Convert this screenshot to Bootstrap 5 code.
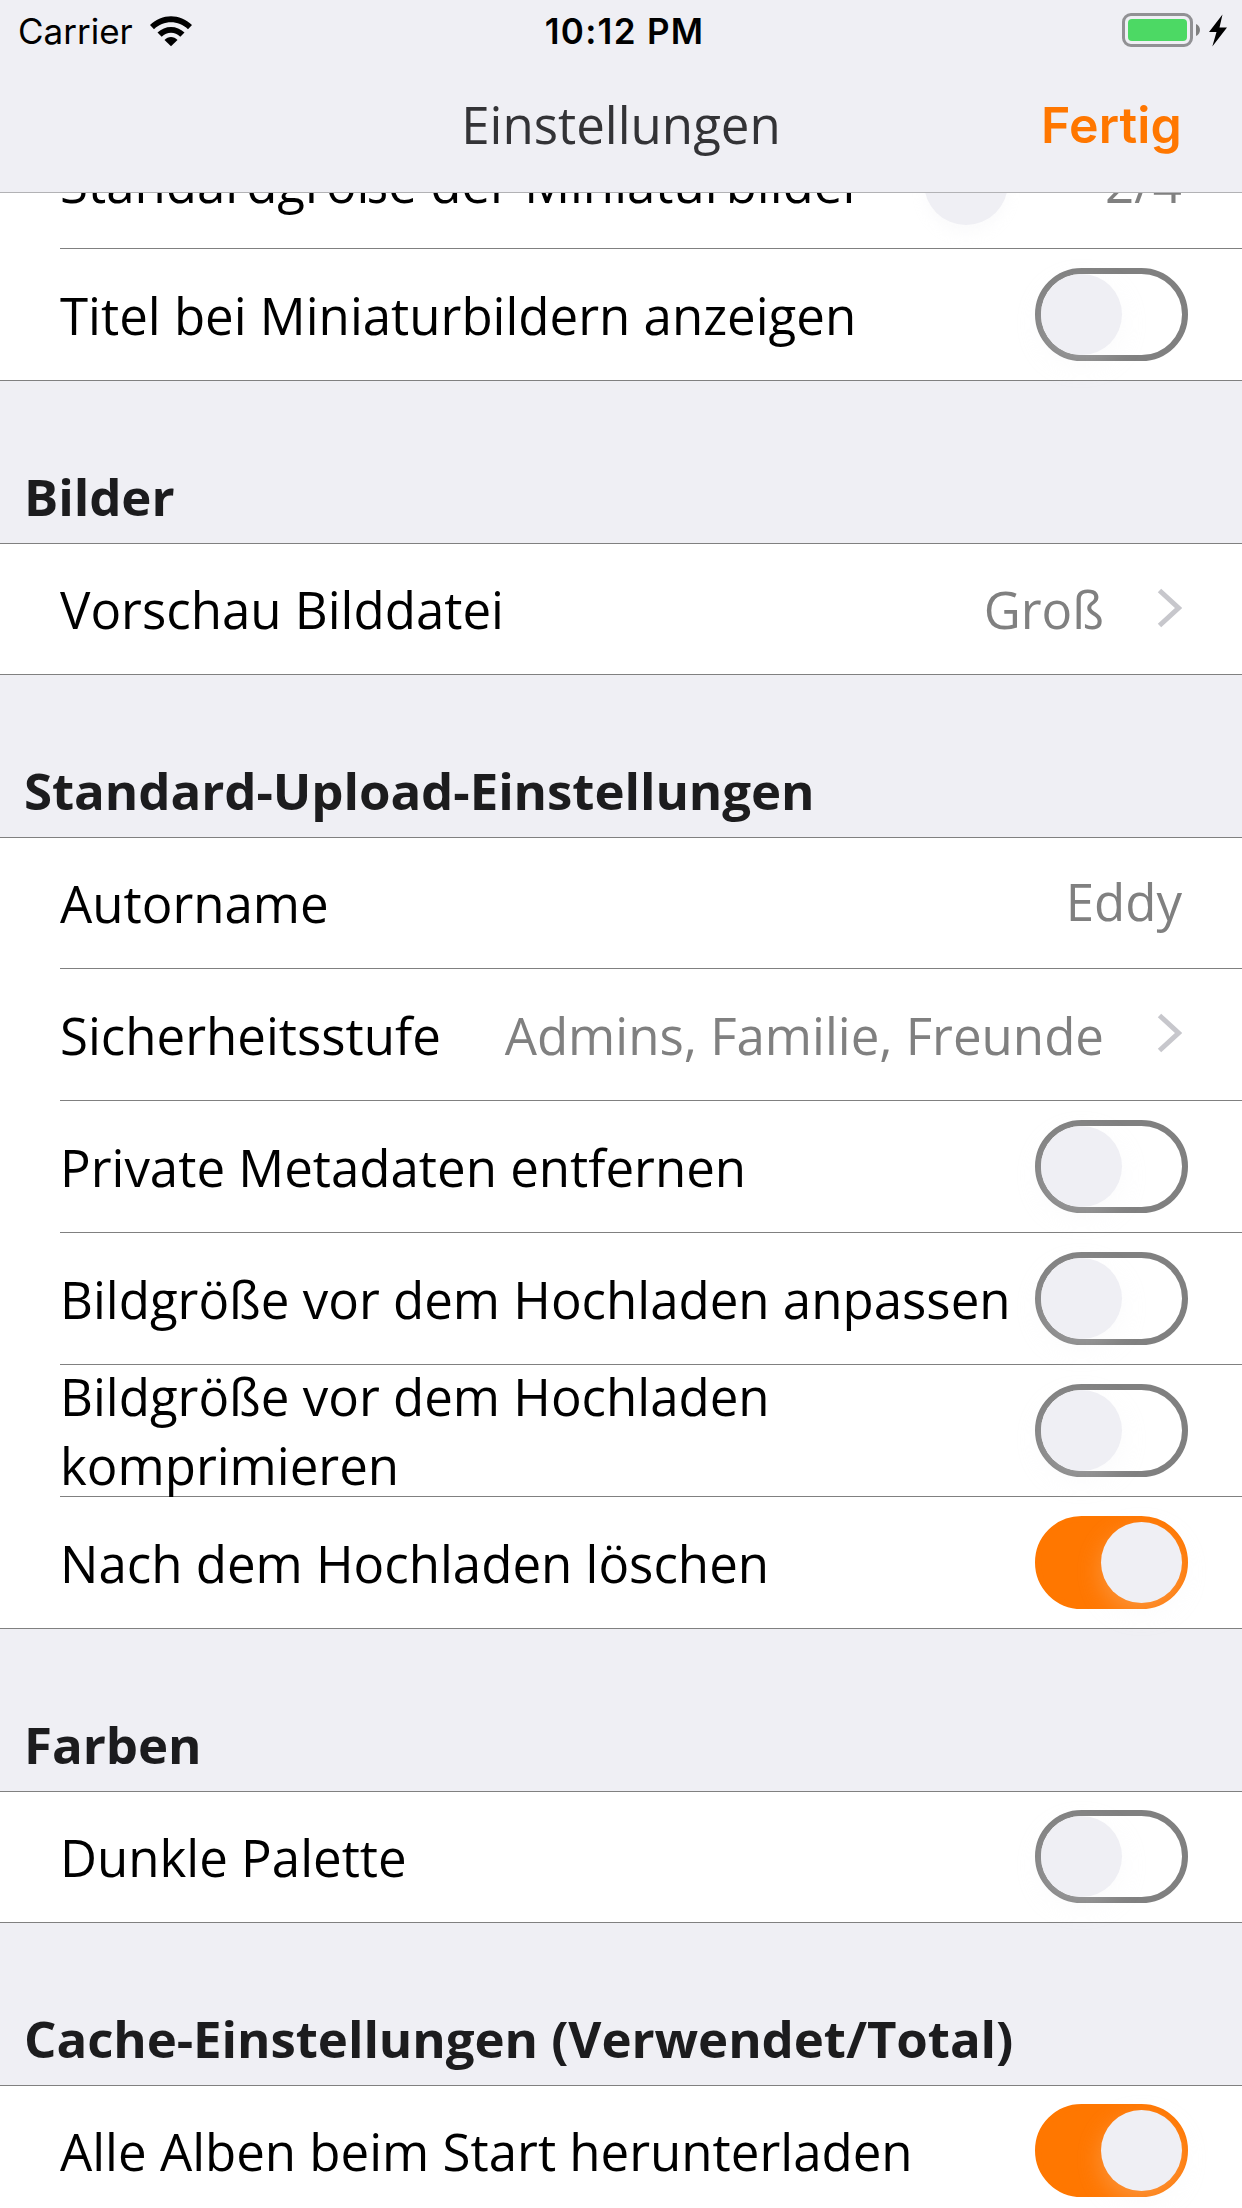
<!DOCTYPE html>
<html lang="de">
<head>
<meta charset="utf-8">
<meta name="viewport" content="width=device-width, initial-scale=1">
<title>Einstellungen</title>
<link href="https://cdn.jsdelivr.net/npm/bootstrap@5.3.0/dist/css/bootstrap.min.css" rel="stylesheet">
<style>
  body { background: #efeff4; color: #000; font-family: "Open Sans", "Noto Sans", sans-serif; font-size: 51px; line-height: 69px; width: 1242px; height: 2208px; overflow: hidden; }
  .topbar { background: #efeff4; height: 193px; border-bottom: 1px solid #b2b2b5; z-index: 10; }
  .statusbar { height: 62px; padding: 0 15px 0 18px; font-family: Inter, "Liberation Sans", sans-serif; font-size: 35px; line-height: 62px; }
  .statusbar > div, .titlebar > div { flex: 1 1 0; }
  .clock { font-weight: 600; letter-spacing: 1.3px; padding-left: 4px; }
  .titlebar { height: 125px; padding: 0 60px; }
  .page-title { color: #333336; font-size: 51px; line-height: 69px; }
  .done { color: #ff7700; font: 600 50px/69px Inter, "Liberation Sans", sans-serif; letter-spacing: .15px; text-decoration: none; }
  .settings { margin-top: -75px; }
  .section-title { height: 162px; padding: 0 24px 12px; color: #1c1c1e; font-size: 51px; line-height: 69px; font-weight: 700; letter-spacing: -.08px; margin: 0; }
  .group { background: #fff; border-top: 1px solid #808080; border-bottom: 1px solid #808080; }
  .setting { height: 132px; margin-left: 60px; padding-right: 54px; border-bottom: 1px solid #808080; }
  .setting:first-child { height: 131px; }
  .setting:last-child { height: 131px; border-bottom: 0; }
  .setting:only-child { height: 130px; }
  .caption-text { padding-top: 2px; }
  .value { color: #808080; white-space: nowrap; padding-right: 6px; }
  .chevron { margin: 0 6px 3px 47px; }
  .toggle { flex: none; align-self: flex-end; width: 153px; height: 93px; margin-bottom: 19px; border: 6px solid #808080; border-radius: 47px; }
  .toggle::after { content: ""; display: block; width: 81px; height: 81px; border-radius: 50%; background: #efeff4; box-shadow: 0 9px 24px rgba(239,239,244,.25); }
  .toggle.on { background: #ff7700; border-color: #ff7700; }
  .toggle.on::after { margin-left: 60px; }
  .thumb { width: 84px; height: 84px; border-radius: 50%; background: #efeff4; box-shadow: 0 9px 12px rgba(239,239,244,.25); margin-right: 97px; }
</style>
</head>
<body>
<header class="topbar position-relative">
  <div class="statusbar d-flex align-items-center">
    <div class="d-flex align-items-center">
      <span>Carrier</span>
      <svg class="ms-3" width="44" height="32" viewBox="0 0 44 32">
        <path d="M1 10C13-1.700 31-1.700 43 10L39 14.200C29.500 5 14.500 5 5 14.200Z"/>
        <path d="M8.500 17.500C16 10 28 10 35.500 17.500L31.300 21.700C26 16.400 18 16.400 12.700 21.700Z"/>
        <path d="M15.500 25C19 21 25 21 28.500 25L22 31.200Z"/>
      </svg>
    </div>
    <span class="clock">10:12 PM</span>
    <div class="d-flex justify-content-end align-items-center">
      <svg width="107" height="36" viewBox="0 0 107 36">
        <rect x="3.500" y="1.500" width="68" height="31" rx="7.500" fill="none" stroke="#919194" stroke-width="3"/>
        <rect x="8" y="6" width="59" height="22" rx="4" fill="#4cd964"/>
        <path d="M76 11C81.300 13 81.300 21 76 23Z" fill="#808080"/>
        <path d="M102.500 1.500L89 19H96.500L92.300 33.500L107 14.500H99.500Z"/>
      </svg>
    </div>
  </div>
  <div class="titlebar d-flex align-items-center">
    <div></div>
    <span class="page-title">Einstellungen</span>
    <div class="text-end"><a class="done" href="#">Fertig</a></div>
  </div>
</header>

<main class="settings">
  <div class="group border-top-0">
    <div class="setting d-flex align-items-center">
      <span class="me-auto">Standardgröße der Miniaturbilder</span>
      <span class="thumb"></span><span class="value">2/4</span>
    </div>
    <div class="setting d-flex align-items-center"><span class="caption-text me-auto">Titel bei Miniaturbildern anzeigen</span><span class="toggle"></span></div>
  </div>

  <h2 class="section-title d-flex align-items-end">Bilder</h2>
  <div class="group">
    <div class="setting d-flex align-items-center">
      <span class="me-auto">Vorschau Bilddatei</span><span class="value">Groß</span>
      <svg class="chevron" width="25" height="40" viewBox="0 0 25 40"><path d="M2.500 2.500L21.500 20L2.500 37.500" fill="none" stroke="#c7c7cc" stroke-width="5"/></svg>
    </div>
  </div>

  <h2 class="section-title d-flex align-items-end">Standard-Upload-Einstellungen</h2>
  <div class="group">
    <div class="setting d-flex align-items-center"><span class="me-auto">Autorname</span><span class="value pb-1">Eddy</span></div>
    <div class="setting d-flex align-items-center">
      <span class="caption-text me-auto">Sicherheitsstufe</span><span class="value caption-text">Admins, Familie, Freunde</span>
      <svg class="chevron" width="25" height="40" viewBox="0 0 25 40"><path d="M2.500 2.500L21.500 20L2.500 37.500" fill="none" stroke="#c7c7cc" stroke-width="5"/></svg>
    </div>
    <div class="setting d-flex align-items-center"><span class="caption-text me-auto">Private Metadaten entfernen</span><span class="toggle"></span></div>
    <div class="setting d-flex align-items-center"><span class="caption-text me-auto">Bildgröße vor dem Hochladen anpassen</span><span class="toggle"></span></div>
    <div class="setting d-flex align-items-center"><span class="me-auto">Bildgröße vor dem Hochladen komprimieren</span><span class="toggle"></span></div>
    <div class="setting d-flex align-items-center"><span class="caption-text me-auto">Nach dem Hochladen löschen</span><span class="toggle on"></span></div>
  </div>

  <h2 class="section-title d-flex align-items-end">Farben</h2>
  <div class="group">
    <div class="setting d-flex align-items-center"><span class="me-auto">Dunkle Palette</span><span class="toggle"></span></div>
  </div>

  <h2 class="section-title d-flex align-items-end">Cache-Einstellungen (Verwendet/Total)</h2>
  <div class="group">
    <div class="setting d-flex align-items-center"><span class="me-auto">Alle Alben beim Start herunterladen</span><span class="toggle on"></span></div>
  </div>
</main>
<script src="https://cdn.jsdelivr.net/npm/bootstrap@5.3.0/dist/js/bootstrap.bundle.min.js"></script>
</body>
</html>
